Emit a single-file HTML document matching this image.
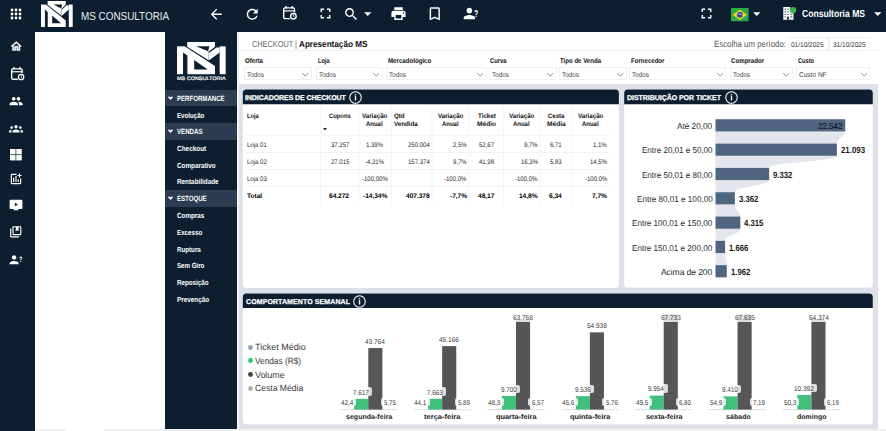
<!DOCTYPE html>
<html lang="pt-BR"><head><meta charset="utf-8"><title>MS Consultoria - Checkout</title>
<style>
html,body{margin:0;padding:0;background:#fff;}
body{width:886px;height:431px;overflow:hidden;position:relative;font-family:"Liberation Sans",sans-serif;}
.t{position:absolute;white-space:nowrap;display:block;transform-origin:0 50%;transform:rotate(.03deg);}
.r{position:absolute;}
svg{position:absolute;overflow:visible;}
.lb{background:rgba(255,255,255,.8);border-radius:2px;}
</style></head><body>
<div class="r" style="left:0px;top:0px;width:886.00px;height:32.00px;background:#0c1e30;"></div>
<div class="r" style="left:0px;top:32px;width:35.00px;height:399.00px;background:#0c1e30;"></div>
<div class="r" style="left:165px;top:32px;width:72.00px;height:397.00px;background:#0c1e30;"></div>
<div class="r" style="left:237px;top:32px;width:641.00px;height:399.00px;background:#dee1ea;"></div>
<div class="r" style="left:238px;top:32px;width:640.00px;height:52.00px;background:#ffffff;"></div>
<div class="r" style="left:238px;top:50px;width:640.00px;height:1.00px;background:#f0f0f2;"></div>
<div class="r" style="left:237px;top:32px;width:2.00px;height:399.00px;background:#f1f3f9;"></div>
<svg style="left:9.600px;top:7.700px" width="12" height="12" viewBox="0 0 12 12" fill="#fff"><circle cx="2" cy="2" r="1.400"/><circle cx="2" cy="6" r="1.400"/><circle cx="2" cy="10" r="1.400"/><circle cx="6" cy="2" r="1.400"/><circle cx="6" cy="6" r="1.400"/><circle cx="6" cy="10" r="1.400"/><circle cx="10" cy="2" r="1.400"/><circle cx="10" cy="6" r="1.400"/><circle cx="10" cy="10" r="1.400"/></svg>
<svg style="left:40.5px;top:0.8px" width="31.7" height="26" viewBox="0 0 525 347" preserveAspectRatio="none">
<rect x="0" y="47" width="65" height="300" fill="#fff"/>
<rect x="460" y="47" width="65" height="300" fill="#fff"/>
<polygon points="110,0 410,0 410,50 340,104 340,196 110,50" fill="#fff"/>
<polygon points="205,47 348,47 336,100" fill="#0c1e30"/>
<polygon points="460,58 460,112 350,194 340,196 340,120 426,58" fill="#fff"/>
<polygon points="65,47 82,47 410,260 410,347 112,347 112,146 65,114" fill="#fff"/>
<polygon points="185,194 185,297 332,297" fill="#0c1e30"/>
</svg>
<span class="t " style="left:80.60px;top:9px;font-size:11.6px;line-height:14px;color:#e8ecf0;transform:rotate(.03deg) scaleX(0.8535);">MS CONSULTORIA</span>
<svg style="left:208.25px;top:5.65px" width="16.5" height="16.5" viewBox="0 0 24 24" fill="#fff"><path d="M20 11H7.83l5.59-5.59L12 4l-8 8 8 8 1.41-1.41L7.83 13H20v-2z"/></svg>
<svg style="left:244.05px;top:5.65px" width="16.5" height="16.5" viewBox="0 0 24 24" fill="#fff"><path d="M17.65 6.35C16.2 4.9 14.21 4 12 4c-4.42 0-7.99 3.58-7.99 8s3.57 8 7.99 8c3.73 0 6.84-2.55 7.73-6h-2.08c-.82 2.33-3.04 4-5.65 4-3.31 0-6-2.69-6-6s2.69-6 6-6c1.66 0 3.14.69 4.22 1.78L13 11h7V4l-2.35 2.35z"/></svg>
<svg style="left:282.6px;top:6.4px" width="13.6" height="13.6" viewBox="0 0 13.6 13.6"><rect x="0.700" y="1.900" width="10.800" height="10.700" rx="1.300" fill="none" stroke="#fff" stroke-width="1.400"/><rect x="2.300" y="0" width="1.400" height="2.400" fill="#fff"/><rect x="8.500" y="0" width="1.400" height="2.400" fill="#fff"/><rect x="0.700" y="4.300" width="10.800" height="1.200" fill="#fff"/><circle cx="10.400" cy="10.300" r="4.100" fill="#0c1e30"/><circle cx="10.400" cy="10.300" r="2.800" fill="none" stroke="#fff" stroke-width="1.300"/><path d="M10.400 8.800v1.600l1.100 .7" stroke="#fff" stroke-width="0.900" fill="none"/></svg>
<svg style="left:316.80px;top:5.40px" width="17" height="17" viewBox="0 0 24 24" fill="#fff"><path d="M7 14H5v5h5v-2H7v-3zm-2-4h2V7h3V5H5v5zm12 7h-3v2h5v-5h-2v3zM14 5v2h3v3h2V5h-5z"/></svg>
<svg style="left:343.25px;top:5.65px" width="16.5" height="16.5" viewBox="0 0 24 24" fill="#fff"><path d="M15.5 14h-.79l-.28-.27C15.41 12.59 16 11.11 16 9.5 16 5.91 13.09 3 9.5 3S3 5.91 3 9.5 5.91 16 9.5 16c1.61 0 3.09-.59 4.23-1.57l.27.28v.79l5 4.99L20.49 19l-4.99-5zm-6 0C7.01 14 5 11.99 5 9.5S7.01 5 9.5 5 14 7.01 14 9.5 11.99 14 9.5 14z"/></svg>
<svg style="left:358.55px;top:5.15px" width="17.5" height="17.5" viewBox="0 0 24 24" fill="#fff"><path d="M7 10l5 5 5-5z"/></svg>
<svg style="left:390.10px;top:5.20px" width="17" height="17" viewBox="0 0 24 24" fill="#fff"><path d="M19 8H5c-1.66 0-3 1.34-3 3v6h4v4h12v-4h4v-6c0-1.66-1.34-3-3-3zm-3 11H8v-5h8v5zm3-7c-.55 0-1-.45-1-1s.45-1 1-1 1 .45 1 1-.45 1-1 1zm-1-9H6v4h12V3z"/></svg>
<svg style="left:425.95px;top:4.85px" width="17.5" height="17.5" viewBox="0 0 24 24" fill="#fff"><path d="M17 3H7c-1.1 0-1.99.9-1.99 2L5 21l7-3 7 3V5c0-1.1-.9-2-2-2zm0 15l-5-2.18L7 18V5h10v13z"/></svg>
<svg style="left:462.70px;top:5.40px" width="17" height="17" viewBox="0 0 24 24" fill="#fff"><path d="M9 12c2.210 0 4-1.790 4-4s-1.790-4-4-4-4 1.790-4 4 1.790 4 4 4zm0 2c-2.670 0-8 1.340-8 4v2h16v-2c0-2.660-5.330-4-8-4z"/></svg>
<span class="t " style="left:474.40px;top:7px;font-size:10px;line-height:13px;color:#fff;font-weight:700;transform:rotate(.03deg) scaleX(0.6876);">?</span>
<svg style="left:697.50px;top:5.30px" width="17" height="17" viewBox="0 0 24 24" fill="#fff"><path d="M7 14H5v5h5v-2H7v-3zm-2-4h2V7h3V5H5v5zm12 7h-3v2h5v-5h-2v3zM14 5v2h3v3h2V5h-5z"/></svg>
<svg style="left:731px;top:7.7px" width="17.6" height="13.3" viewBox="0 0 176 133"><rect width="176" height="133" rx="8" fill="#2aa84a"/><polygon points="88,14 160,66.500 88,119 16,66.500" fill="#f7d417"/><circle cx="88" cy="66.500" r="30" fill="#2b49a3"/><path d="M59 60c20-6 42 0 58 16" stroke="#fff" stroke-width="6" fill="none"/></svg>
<svg style="left:748.25px;top:5.25px" width="17.5" height="17.5" viewBox="0 0 24 24" fill="#fff"><path d="M7 10l5 5 5-5z"/></svg>
<svg style="left:783px;top:7px" width="11" height="13" viewBox="0 0 11 13"><rect x="0.300" y="0" width="7" height="12.800" fill="#fff"/><rect x="7.300" y="4.400" width="3.200" height="8.400" fill="#fff"/><g fill="#0c1e30"><rect x="1.700" y="1.600" width="1.100" height="1.100"/><rect x="4.400" y="1.600" width="1.100" height="1.100"/><rect x="1.700" y="4.200" width="1.100" height="1.100"/><rect x="4.400" y="4.200" width="1.100" height="1.100"/><rect x="1.700" y="6.800" width="1.100" height="1.100"/><rect x="4.400" y="6.800" width="1.100" height="1.100"/><rect x="1.700" y="9.400" width="1.100" height="1.100"/><rect x="8.200" y="6.800" width="1.100" height="1.100"/><rect x="8.200" y="9.400" width="1.100" height="1.100"/><rect x="4.100" y="9.600" width="1.700" height="3.200"/></g></svg>
<svg style="left:789.600px;top:6.800px" width="6.200" height="6.200" viewBox="0 0 10 10"><circle cx="5" cy="5" r="5" fill="#3fb04f"/></svg>
<span class="t " style="left:801.70px;top:7px;font-size:10.2px;line-height:13px;color:#fff;font-weight:700;transform:rotate(.03deg) scaleX(0.8435);">Consultoria MS</span>
<svg style="left:869.25px;top:5.25px" width="17.5" height="17.5" viewBox="0 0 24 24" fill="#fff"><path d="M7 10l5 5 5-5z"/></svg>
<svg style="left:9.85px;top:39.75px" width="12.5" height="12.5" viewBox="0 0 24 24" fill="#fff"><path stroke="#fff" stroke-width="1.1" d="M12 5.69l5 4.5V18h-2v-6H9v6H7v-7.81l5-4.5M12 3L2 12h3v8h6v-6h2v6h6v-8h3L12 3z"/></svg>
<svg style="left:10.6px;top:66.8px" width="13.2" height="13.2" viewBox="0 0 13.6 13.6"><rect x="0.700" y="1.900" width="10.800" height="10.700" rx="1.300" fill="none" stroke="#fff" stroke-width="1.400"/><rect x="2.300" y="0" width="1.400" height="2.400" fill="#fff"/><rect x="8.500" y="0" width="1.400" height="2.400" fill="#fff"/><rect x="0.700" y="4.300" width="10.800" height="1.200" fill="#fff"/><circle cx="10.400" cy="10.300" r="4.100" fill="#0c1e30"/><circle cx="10.400" cy="10.300" r="2.800" fill="none" stroke="#fff" stroke-width="1.300"/><path d="M10.400 8.800v1.600l1.100 .7" stroke="#fff" stroke-width="0.900" fill="none"/></svg>
<svg style="left:8.90px;top:94.10px" width="14.2" height="14.2" viewBox="0 0 24 24" fill="#fff"><path d="M16 11c1.66 0 2.99-1.34 2.99-3S17.66 5 16 5c-1.66 0-3 1.34-3 3s1.34 3 3 3zm-8 0c1.66 0 2.990-1.340 2.990-3S9.660 5 8 5C6.340 5 5 6.340 5 8s1.340 3 3 3zm0 2c-2.330 0-7 1.170-7 3.500V19h14v-2.500c0-2.330-4.670-3.500-7-3.500zm8 0c-.29 0-.62.020-.97.050 1.160.840 1.970 1.970 1.970 3.450V19h6v-2.500c0-2.330-4.670-3.500-7-3.500z"/></svg>
<svg style="left:9.00px;top:121.60px" width="14" height="14" viewBox="0 0 24 24" fill="#fff"><circle cx="12" cy="8.2" r="2.9"/><circle cx="4.6" cy="9.6" r="2.2"/><circle cx="19.400" cy="9.600" r="2.200"/><path d="M6 18v-1.500c0-2.300 3.200-3.600 6-3.600s6 1.300 6 3.600V18H6z"/><path d="M0 18v-1.200c0-1.700 1.700-2.700 3.700-3 .300 0 .700 0 1.200.100-.700.800-.900 1.600-.900 2.600V18H0z"/><path d="M24 18v-1.200c0-1.700-1.700-2.700-3.700-3-.3 0-.7 0-1.200.1.700.8.900 1.600.900 2.600V18H24z"/></svg>
<svg style="left:9.800px;top:149.100px" width="11.800" height="11.400" viewBox="0 0 11.800 11.400"><rect width="11.800" height="11.400" fill="#fff"/><rect x="5.550" y="0" width="0.700" height="11.400" fill="#0c1e30"/><rect x="0" y="5.350" width="11.800" height="0.700" fill="#0c1e30"/></svg>
<svg style="left:9.00px;top:171.90px" width="14" height="14" viewBox="0 0 24 24" fill="#fff"><path d="M19 19H5V5h8V3H5c-1.100 0-2 .9-2 2v14c0 1.100.9 2 2 2h14c1.100 0 2-.9 2-2v-8h-2v8z"/><path d="M15 13h2v4h-2zM7 10h2v7H7zM11 7h2v10h-2z"/><path d="M19 5V2.500h-2V5h-2.500v2H17v2.500h2V7h2.500V5z"/></svg>
<svg style="left:9.30px;top:197.60px" width="14" height="14" viewBox="0 0 24 24" fill="#fff"><path d="M21 3H3c-1.100 0-2 .9-2 2v12c0 1.100.9 2 2 2h5v2h8v-2h5c1.100 0 2-.9 2-2V5c0-1.100-.9-2-2-2z"/><path d="M10 8v6l5.500-3z" fill="#0c1e30"/></svg>
<svg style="left:9.25px;top:224.55px" width="13.5" height="13.5" viewBox="0 0 24 24" fill="#fff"><path d="M4 6H2v14c0 1.100.9 2 2 2h14v-2H4V6z"/><path d="M20 2H8c-1.100 0-2 .9-2 2v12c0 1.100.9 2 2 2h12c1.100 0 2-.9 2-2V4c0-1.100-.9-2-2-2zm0 14H8V4h4v7l2.500-1.500L17 11V4h3v12z"/></svg>
<svg style="left:9.23px;top:252.57px" width="13.65" height="13.65" viewBox="0 0 24 24" fill="#fff"><path d="M9 12c2.210 0 4-1.790 4-4s-1.790-4-4-4-4 1.790-4 4 1.790 4 4 4zm0 2c-2.670 0-8 1.340-8 4v2h16v-2c0-2.660-5.330-4-8-4z"/></svg>
<span class="t " style="left:18.90px;top:254px;font-size:7.8px;line-height:11px;color:#fff;font-weight:700;transform:rotate(.03deg) scaleX(0.6926);">?</span>
<svg style="left:176.8px;top:41.5px" width="48.7" height="32.2" viewBox="0 0 525 347" preserveAspectRatio="none">
<rect x="0" y="47" width="65" height="300" fill="#fff"/>
<rect x="460" y="47" width="65" height="300" fill="#fff"/>
<polygon points="110,0 410,0 410,50 340,104 340,196 110,50" fill="#fff"/>
<polygon points="205,47 348,47 336,100" fill="#0c1e30"/>
<polygon points="460,58 460,112 350,194 340,196 340,120 426,58" fill="#fff"/>
<polygon points="65,47 82,47 410,260 410,347 112,347 112,146 65,114" fill="#fff"/>
<polygon points="185,194 185,297 332,297" fill="#0c1e30"/>
</svg>
<span class="t " style="left:177.10px;top:75px;font-size:4.9px;line-height:7px;color:#fff;transform:rotate(.03deg) scaleX(1.1156);-webkit-text-stroke:0.2px #fff;">MS CONSULTORIA</span>
<div class="r" style="left:165px;top:90px;width:72.00px;height:16.00px;background:#2c3d51;"></div>
<span class="t " style="left:177.00px;top:93px;font-size:7.5px;line-height:11px;color:#fff;font-weight:700;transform:rotate(.03deg) scaleX(0.8102);">PERFORMANCE</span>
<svg style="left:168.400px;top:95.80px" width="5" height="4" viewBox="0 0 10 8"><path d="M1 1.500l4 4 4-4" stroke="#fff" stroke-width="3.200" fill="none"/></svg>
<span class="t " style="left:177.00px;top:110px;font-size:7.4px;line-height:11px;color:#fff;font-weight:700;transform:rotate(.03deg) scaleX(0.8328);">Evolução</span>
<div class="r" style="left:165px;top:123px;width:72.00px;height:17.00px;background:#2c3d51;"></div>
<span class="t " style="left:177.00px;top:126px;font-size:7.5px;line-height:11px;color:#fff;font-weight:700;transform:rotate(.03deg) scaleX(0.8158);">VENDAS</span>
<svg style="left:168.400px;top:129.30px" width="5" height="4" viewBox="0 0 10 8"><path d="M1 1.500l4 4 4-4" stroke="#fff" stroke-width="3.200" fill="none"/></svg>
<span class="t " style="left:177.00px;top:143px;font-size:7.4px;line-height:11px;color:#fff;font-weight:700;transform:rotate(.03deg) scaleX(0.8690);">Checkout</span>
<span class="t " style="left:177.00px;top:160px;font-size:7.4px;line-height:11px;color:#fff;font-weight:700;transform:rotate(.03deg) scaleX(0.8556);">Comparativo</span>
<span class="t " style="left:177.00px;top:176px;font-size:7.4px;line-height:11px;color:#fff;font-weight:700;transform:rotate(.03deg) scaleX(0.8594);">Rentabilidade</span>
<div class="r" style="left:165px;top:190.3px;width:72.00px;height:16.50px;background:#2c3d51;"></div>
<span class="t " style="left:177.00px;top:193px;font-size:7.5px;line-height:11px;color:#fff;font-weight:700;transform:rotate(.03deg) scaleX(0.8101);">ESTOQUE</span>
<svg style="left:168.400px;top:196.35px" width="5" height="4" viewBox="0 0 10 8"><path d="M1 1.500l4 4 4-4" stroke="#fff" stroke-width="3.200" fill="none"/></svg>
<span class="t " style="left:177.00px;top:210px;font-size:7.4px;line-height:11px;color:#fff;font-weight:700;transform:rotate(.03deg) scaleX(0.8511);">Compras</span>
<span class="t " style="left:177.00px;top:227px;font-size:7.4px;line-height:11px;color:#fff;font-weight:700;transform:rotate(.03deg) scaleX(0.8424);">Excesso</span>
<span class="t " style="left:177.00px;top:244px;font-size:7.4px;line-height:11px;color:#fff;font-weight:700;transform:rotate(.03deg) scaleX(0.8391);">Ruptura</span>
<span class="t " style="left:177.00px;top:260px;font-size:7.4px;line-height:11px;color:#fff;font-weight:700;transform:rotate(.03deg) scaleX(0.8298);">Sem Giro</span>
<span class="t " style="left:177.00px;top:277px;font-size:7.4px;line-height:11px;color:#fff;font-weight:700;transform:rotate(.03deg) scaleX(0.8444);">Reposição</span>
<span class="t " style="left:177.00px;top:294px;font-size:7.4px;line-height:11px;color:#fff;font-weight:700;transform:rotate(.03deg) scaleX(0.8602);">Prevenção</span>
<span class="t " style="left:251.80px;top:38px;font-size:8.9px;line-height:12px;color:#666;transform:rotate(.03deg) scaleX(0.8275);">CHECKOUT | </span>
<span class="t " style="left:299.40px;top:38px;font-size:8.9px;line-height:12px;color:#111;font-weight:700;transform:rotate(.03deg) scaleX(0.9185);">Apresentação MS</span>
<span class="t " style="left:713.60px;top:38px;font-size:9.0px;line-height:12px;color:#555;transform:rotate(.03deg) scaleX(0.8722);">Escolha um período:</span>
<div class="r" style="left:787.6px;top:36.8px;width:39.10px;height:12.20px;border:0.5px solid #f0f0f0;background:#fff"></div>
<div class="r" style="left:829.4px;top:36.8px;width:39.10px;height:12.20px;border:0.5px solid #f0f0f0;background:#fff"></div>
<span class="t " style="left:791.30px;top:40px;font-size:7.0px;line-height:9px;color:#333;transform:rotate(.03deg) scaleX(0.9305);">01/10/2025</span>
<span class="t " style="left:833.20px;top:40px;font-size:7.0px;line-height:9px;color:#333;transform:rotate(.03deg) scaleX(0.9305);">31/10/2025</span>
<span class="t " style="left:245.00px;top:56px;font-size:6.9px;line-height:9px;color:#111;font-weight:700;transform:rotate(.03deg) scaleX(0.8857);">Oferta</span>
<div class="r" style="left:243.5px;top:67.4px;width:66.50px;height:11.00px;border:0.5px solid #f0f0f0;background:#fff"></div>
<span class="t " style="left:246.50px;top:70px;font-size:7.0px;line-height:9px;color:#444;transform:rotate(.03deg) scaleX(0.9101);">Todos</span>
<svg style="left:302.20px;top:72.70px" width="6.50" height="3.4" viewBox="0 0 6.50 3.4"><path d="M0.2 0.2L3.25 3L6.30 0.2" stroke="#555" stroke-width="0.7" fill="none"/></svg>
<span class="t " style="left:317.50px;top:56px;font-size:6.9px;line-height:9px;color:#111;font-weight:700;transform:rotate(.03deg) scaleX(0.8108);">Loja</span>
<div class="r" style="left:316.2px;top:67.4px;width:64.80px;height:11.00px;border:0.5px solid #f0f0f0;background:#fff"></div>
<span class="t " style="left:319.20px;top:70px;font-size:7.0px;line-height:9px;color:#444;transform:rotate(.03deg) scaleX(0.9101);">Todos</span>
<svg style="left:373.20px;top:72.70px" width="6.50" height="3.4" viewBox="0 0 6.50 3.4"><path d="M0.2 0.2L3.25 3L6.30 0.2" stroke="#555" stroke-width="0.7" fill="none"/></svg>
<span class="t " style="left:388.00px;top:56px;font-size:6.9px;line-height:9px;color:#111;font-weight:700;transform:rotate(.03deg) scaleX(0.8893);">Mercadológico</span>
<div class="r" style="left:386.4px;top:67.4px;width:98.50px;height:11.00px;border:0.5px solid #f0f0f0;background:#fff"></div>
<span class="t " style="left:389.40px;top:70px;font-size:7.0px;line-height:9px;color:#444;transform:rotate(.03deg) scaleX(0.9101);">Todos</span>
<svg style="left:477.10px;top:72.70px" width="6.50" height="3.4" viewBox="0 0 6.50 3.4"><path d="M0.2 0.2L3.25 3L6.30 0.2" stroke="#555" stroke-width="0.7" fill="none"/></svg>
<span class="t " style="left:490.10px;top:56px;font-size:6.9px;line-height:9px;color:#111;font-weight:700;transform:rotate(.03deg) scaleX(0.8487);">Curva</span>
<div class="r" style="left:489.4px;top:67.4px;width:65.40px;height:11.00px;border:0.5px solid #f0f0f0;background:#fff"></div>
<span class="t " style="left:492.10px;top:70px;font-size:7.0px;line-height:9px;color:#444;transform:rotate(.03deg) scaleX(0.9101);">Todos</span>
<svg style="left:547.00px;top:72.70px" width="6.50" height="3.4" viewBox="0 0 6.50 3.4"><path d="M0.2 0.2L3.25 3L6.30 0.2" stroke="#555" stroke-width="0.7" fill="none"/></svg>
<span class="t " style="left:560.30px;top:56px;font-size:6.9px;line-height:9px;color:#111;font-weight:700;transform:rotate(.03deg) scaleX(0.8810);">Tipo de Venda</span>
<div class="r" style="left:559px;top:67.4px;width:65.50px;height:11.00px;border:0.5px solid #f0f0f0;background:#fff"></div>
<span class="t " style="left:562.00px;top:70px;font-size:7.0px;line-height:9px;color:#444;transform:rotate(.03deg) scaleX(0.9101);">Todos</span>
<svg style="left:616.70px;top:72.70px" width="6.50" height="3.4" viewBox="0 0 6.50 3.4"><path d="M0.2 0.2L3.25 3L6.30 0.2" stroke="#555" stroke-width="0.7" fill="none"/></svg>
<span class="t " style="left:630.50px;top:56px;font-size:6.9px;line-height:9px;color:#111;font-weight:700;transform:rotate(.03deg) scaleX(0.8826);">Fornecedor</span>
<div class="r" style="left:629.2px;top:67.4px;width:95.20px;height:11.00px;border:0.5px solid #f0f0f0;background:#fff"></div>
<span class="t " style="left:632.20px;top:70px;font-size:7.0px;line-height:9px;color:#444;transform:rotate(.03deg) scaleX(0.9101);">Todos</span>
<svg style="left:716.60px;top:72.70px" width="6.50" height="3.4" viewBox="0 0 6.50 3.4"><path d="M0.2 0.2L3.25 3L6.30 0.2" stroke="#555" stroke-width="0.7" fill="none"/></svg>
<span class="t " style="left:731.20px;top:56px;font-size:6.9px;line-height:9px;color:#111;font-weight:700;transform:rotate(.03deg) scaleX(0.8901);">Comprador</span>
<div class="r" style="left:729.9px;top:67.4px;width:60.90px;height:11.00px;border:0.5px solid #f0f0f0;background:#fff"></div>
<span class="t " style="left:732.90px;top:70px;font-size:7.0px;line-height:9px;color:#444;transform:rotate(.03deg) scaleX(0.9101);">Todos</span>
<svg style="left:783.00px;top:72.70px" width="6.50" height="3.4" viewBox="0 0 6.50 3.4"><path d="M0.2 0.2L3.25 3L6.30 0.2" stroke="#555" stroke-width="0.7" fill="none"/></svg>
<span class="t " style="left:798.10px;top:56px;font-size:6.9px;line-height:9px;color:#111;font-weight:700;transform:rotate(.03deg) scaleX(0.8236);">Custo</span>
<div class="r" style="left:796.3px;top:67.4px;width:72.20px;height:11.00px;border:0.5px solid #f0f0f0;background:#fff"></div>
<span class="t " style="left:799.30px;top:70px;font-size:7.0px;line-height:9px;color:#444;transform:rotate(.03deg) scaleX(0.9336);">Custo NF</span>
<svg style="left:860.70px;top:72.70px" width="6.50" height="3.4" viewBox="0 0 6.50 3.4"><path d="M0.2 0.2L3.25 3L6.30 0.2" stroke="#555" stroke-width="0.7" fill="none"/></svg>
<svg style="left:0;top:0" width="886" height="431" viewBox="0 0 886 431"><rect x="242.8" y="89.6" width="376.10" height="198.40" rx="3.5" fill="#fff"/><path d="M242.8 104.14999999999999V93.1a3.5 3.5 0 0 1 3.5 -3.5H615.4a3.5 3.5 0 0 1 3.5 3.5V104.14999999999999Z" fill="#0c1e30"/></svg>
<span class="t " style="left:244.80px;top:93px;font-size:7.0px;line-height:9px;color:#fff;font-weight:700;letter-spacing:-0.069px;-webkit-text-stroke:0.25px #fff;">INDICADORES DE CHECKOUT</span>
<svg style="left:349.40px;top:90.85px" width="13" height="13" viewBox="0 0 13 13"><circle cx="6.500" cy="6.500" r="5.750" fill="none" stroke="#fff" stroke-width="1.050"/><rect x="5.800" y="5.100" width="1.400" height="4.300" fill="#fff"/><rect x="5.800" y="3.200" width="1.400" height="1.200" fill="#fff"/></svg>
<svg style="left:0;top:0" width="886" height="431" viewBox="0 0 886 431"><rect x="624.2" y="89.6" width="248.60" height="197.80" rx="3.5" fill="#fff"/><path d="M624.2 104.14999999999999V93.1a3.5 3.5 0 0 1 3.5 -3.5H869.3a3.5 3.5 0 0 1 3.5 3.5V104.14999999999999Z" fill="#0c1e30"/></svg>
<span class="t " style="left:626.60px;top:93px;font-size:7.0px;line-height:9px;color:#fff;font-weight:700;letter-spacing:-0.039px;-webkit-text-stroke:0.25px #fff;">DISTRIBUIÇÃO POR TICKET</span>
<svg style="left:725.20px;top:90.85px" width="13" height="13" viewBox="0 0 13 13"><circle cx="6.500" cy="6.500" r="5.750" fill="none" stroke="#fff" stroke-width="1.050"/><rect x="5.800" y="5.100" width="1.400" height="4.300" fill="#fff"/><rect x="5.800" y="3.200" width="1.400" height="1.200" fill="#fff"/></svg>
<svg style="left:0;top:0" width="886" height="431" viewBox="0 0 886 431"><rect x="242.8" y="293.5" width="630.00" height="130.80" rx="3.5" fill="#fff"/><path d="M242.8 308.05V297.0a3.5 3.5 0 0 1 3.5 -3.5H869.3a3.5 3.5 0 0 1 3.5 3.5V308.05Z" fill="#0c1e30"/></svg>
<span class="t " style="left:245.50px;top:297px;font-size:7.0px;line-height:9px;color:#fff;font-weight:700;letter-spacing:0.099px;-webkit-text-stroke:0.25px #fff;">COMPORTAMENTO SEMANAL</span>
<svg style="left:353.10px;top:294.75px" width="13" height="13" viewBox="0 0 13 13"><circle cx="6.500" cy="6.500" r="5.750" fill="none" stroke="#fff" stroke-width="1.050"/><rect x="5.800" y="5.100" width="1.400" height="4.300" fill="#fff"/><rect x="5.800" y="3.200" width="1.400" height="1.200" fill="#fff"/></svg>
<svg style="left:0;top:0" width="886" height="431" viewBox="0 0 886 431"><rect x="245.5" y="134.80" width="364.6" height="1" fill="#f1f1f3"/><rect x="245.5" y="151.90" width="364.6" height="1" fill="#f1f1f3"/><rect x="245.5" y="169.00" width="364.6" height="1" fill="#f1f1f3"/><rect x="245.5" y="185.90" width="364.6" height="1" fill="#f1f1f3"/><rect x="320.00" y="107" width="1" height="96.6" fill="#f3f4f8"/><rect x="358.30" y="107" width="1" height="96.6" fill="#f3f4f8"/><rect x="390.90" y="107" width="1" height="96.6" fill="#f3f4f8"/><rect x="431.50" y="107" width="1" height="96.6" fill="#f3f4f8"/><rect x="468.30" y="107" width="1" height="96.6" fill="#f3f4f8"/><rect x="502.90" y="107" width="1" height="96.6" fill="#f3f4f8"/><rect x="539.40" y="107" width="1" height="96.6" fill="#f3f4f8"/><rect x="571.60" y="107" width="1" height="96.6" fill="#f3f4f8"/></svg>
<span class="t " style="left:247.30px;top:111px;font-size:6.6px;line-height:9px;color:#111;font-weight:700;transform:rotate(.03deg) scaleX(0.8623);">Loja</span>
<span class="t " style="left:328.70px;top:111px;font-size:6.6px;line-height:9px;color:#111;font-weight:700;transform:rotate(.03deg) scaleX(0.8875);">Cupons</span>
<svg style="left:323px;top:127.800px" width="4" height="2.400" viewBox="0 0 4 2.400"><path d="M0 0h4L2 2.400z" fill="#222"/></svg>
<span class="t " style="left:362.00px;top:111px;font-size:6.6px;line-height:9px;color:#111;font-weight:700;transform:rotate(.03deg) scaleX(0.9354);">Variação</span>
<span class="t " style="left:366.40px;top:119px;font-size:6.6px;line-height:9px;color:#111;font-weight:700;transform:rotate(.03deg) scaleX(0.9054);">Anual</span>
<span class="t " style="left:393.90px;top:111px;font-size:6.6px;line-height:9px;color:#111;font-weight:700;transform:rotate(.03deg) scaleX(0.9240);">Qtd</span>
<span class="t " style="left:393.90px;top:119px;font-size:6.6px;line-height:9px;color:#111;font-weight:700;transform:rotate(.03deg) scaleX(0.9404);">Vendida</span>
<span class="t " style="left:437.70px;top:111px;font-size:6.6px;line-height:9px;color:#111;font-weight:700;transform:rotate(.03deg) scaleX(0.9354);">Variação</span>
<span class="t " style="left:442.10px;top:119px;font-size:6.6px;line-height:9px;color:#111;font-weight:700;transform:rotate(.03deg) scaleX(0.9054);">Anual</span>
<span class="t " style="left:477.50px;top:111px;font-size:6.6px;line-height:9px;color:#111;font-weight:700;transform:rotate(.03deg) scaleX(0.9390);">Ticket</span>
<span class="t " style="left:476.90px;top:119px;font-size:6.6px;line-height:9px;color:#111;font-weight:700;letter-spacing:-0.013px;">Médio</span>
<span class="t " style="left:508.80px;top:111px;font-size:6.6px;line-height:9px;color:#111;font-weight:700;transform:rotate(.03deg) scaleX(0.9354);">Variação</span>
<span class="t " style="left:513.20px;top:119px;font-size:6.6px;line-height:9px;color:#111;font-weight:700;transform:rotate(.03deg) scaleX(0.9054);">Anual</span>
<span class="t " style="left:547.80px;top:111px;font-size:6.6px;line-height:9px;color:#111;font-weight:700;transform:rotate(.03deg) scaleX(0.9123);">Cesta</span>
<span class="t " style="left:546.65px;top:119px;font-size:6.6px;line-height:9px;color:#111;font-weight:700;">Média</span>
<span class="t " style="left:577.80px;top:111px;font-size:6.6px;line-height:9px;color:#111;font-weight:700;transform:rotate(.03deg) scaleX(0.9354);">Variação</span>
<span class="t " style="left:582.20px;top:119px;font-size:6.6px;line-height:9px;color:#111;font-weight:700;transform:rotate(.03deg) scaleX(0.9054);">Anual</span>
<span class="t " style="left:247.30px;top:140px;font-size:6.7px;line-height:9px;color:#262626;transform:rotate(.03deg) scaleX(0.9000);">Loja 01</span>
<span class="t " style="left:330.56px;top:140px;font-size:6.7px;line-height:9px;color:#262626;transform:rotate(.03deg) scaleX(0.9000);">37.257</span>
<span class="t " style="left:366.45px;top:140px;font-size:6.7px;line-height:9px;color:#262626;transform:rotate(.03deg) scaleX(0.9000);">1,39%</span>
<span class="t " style="left:408.20px;top:140px;font-size:6.7px;line-height:9px;color:#262626;transform:rotate(.03deg) scaleX(0.9000);">250.004</span>
<span class="t " style="left:453.06px;top:140px;font-size:6.7px;line-height:9px;color:#262626;transform:rotate(.03deg) scaleX(0.9000);">2,5%</span>
<span class="t " style="left:478.55px;top:140px;font-size:6.7px;line-height:9px;color:#262626;transform:rotate(.03deg) scaleX(0.9000);">52,67</span>
<span class="t " style="left:524.16px;top:140px;font-size:6.7px;line-height:9px;color:#262626;transform:rotate(.03deg) scaleX(0.9000);">9,7%</span>
<span class="t " style="left:549.93px;top:140px;font-size:6.7px;line-height:9px;color:#262626;transform:rotate(.03deg) scaleX(0.9000);">6,71</span>
<span class="t " style="left:593.46px;top:140px;font-size:6.7px;line-height:9px;color:#262626;transform:rotate(.03deg) scaleX(0.9000);">1,1%</span>
<span class="t " style="left:247.30px;top:157px;font-size:6.7px;line-height:9px;color:#262626;transform:rotate(.03deg) scaleX(0.9000);">Loja 02</span>
<span class="t " style="left:330.56px;top:157px;font-size:6.7px;line-height:9px;color:#262626;transform:rotate(.03deg) scaleX(0.9000);">27.015</span>
<span class="t " style="left:365.45px;top:157px;font-size:6.7px;line-height:9px;color:#262626;transform:rotate(.03deg) scaleX(0.9000);">-4,21%</span>
<span class="t " style="left:408.20px;top:157px;font-size:6.7px;line-height:9px;color:#262626;transform:rotate(.03deg) scaleX(0.9000);">157.374</span>
<span class="t " style="left:453.06px;top:157px;font-size:6.7px;line-height:9px;color:#262626;transform:rotate(.03deg) scaleX(0.9000);">9,7%</span>
<span class="t " style="left:478.55px;top:157px;font-size:6.7px;line-height:9px;color:#262626;transform:rotate(.03deg) scaleX(0.9000);">41,98</span>
<span class="t " style="left:520.80px;top:157px;font-size:6.7px;line-height:9px;color:#262626;transform:rotate(.03deg) scaleX(0.9000);">16,3%</span>
<span class="t " style="left:549.93px;top:157px;font-size:6.7px;line-height:9px;color:#262626;transform:rotate(.03deg) scaleX(0.9000);">5,83</span>
<span class="t " style="left:590.10px;top:157px;font-size:6.7px;line-height:9px;color:#262626;transform:rotate(.03deg) scaleX(0.9000);">14,5%</span>
<span class="t " style="left:247.30px;top:174px;font-size:6.7px;line-height:9px;color:#262626;transform:rotate(.03deg) scaleX(0.9000);">Loja 03</span>
<span class="t " style="left:362.09px;top:174px;font-size:6.7px;line-height:9px;color:#262626;transform:rotate(.03deg) scaleX(0.9000);">-100,00%</span>
<span class="t " style="left:444.34px;top:174px;font-size:6.7px;line-height:9px;color:#262626;transform:rotate(.03deg) scaleX(0.9000);">-100,0%</span>
<span class="t " style="left:515.44px;top:174px;font-size:6.7px;line-height:9px;color:#262626;transform:rotate(.03deg) scaleX(0.9000);">-100,0%</span>
<span class="t " style="left:584.74px;top:174px;font-size:6.7px;line-height:9px;color:#262626;transform:rotate(.03deg) scaleX(0.9000);">-100,0%</span>
<span class="t " style="left:247.30px;top:191px;font-size:6.7px;line-height:9px;color:#000;font-weight:700;letter-spacing:-0.078px;">Total</span>
<span class="t " style="left:329.02px;top:191px;font-size:6.7px;line-height:9px;color:#000;font-weight:700;letter-spacing:-0.085px;">64.272</span>
<span class="t " style="left:362.83px;top:191px;font-size:6.7px;line-height:9px;color:#000;font-weight:700;letter-spacing:-0.089px;">-14,34%</span>
<span class="t " style="left:406.39px;top:191px;font-size:6.7px;line-height:9px;color:#000;font-weight:700;letter-spacing:-0.086px;">407.378</span>
<span class="t " style="left:449.73px;top:191px;font-size:6.7px;line-height:9px;color:#000;font-weight:700;letter-spacing:-0.088px;">-7,7%</span>
<span class="t " style="left:477.93px;top:191px;font-size:6.7px;line-height:9px;color:#000;font-weight:700;letter-spacing:-0.084px;">48,17</span>
<span class="t " style="left:519.38px;top:191px;font-size:6.7px;line-height:9px;color:#000;font-weight:700;letter-spacing:-0.095px;">14,8%</span>
<span class="t " style="left:549.44px;top:191px;font-size:6.7px;line-height:9px;color:#000;font-weight:700;letter-spacing:-0.082px;">6,34</span>
<span class="t " style="left:592.31px;top:191px;font-size:6.7px;line-height:9px;color:#000;font-weight:700;letter-spacing:-0.095px;">7,7%</span>
<svg style="left:0;top:0" width="886" height="431" viewBox="0 0 886 431"><path d="M715.50 131.45L845.20 131.45C845.20 137.51 836.86 137.51 836.86 143.57L715.50 143.57ZM715.50 155.77L836.86 155.77C836.86 161.83 769.19 161.83 769.19 167.89L715.50 167.89ZM715.50 180.09L769.19 180.09C769.19 186.15 734.84 186.15 734.84 192.21L715.50 192.21ZM715.50 204.41L734.84 204.41C734.84 210.47 740.33 210.47 740.33 216.53L715.50 216.53ZM715.50 228.73L740.33 228.73C740.33 234.79 725.09 234.79 725.09 240.85L715.50 240.85ZM715.50 253.05L725.09 253.05C725.09 259.11 726.79 259.11 726.79 265.17L715.50 265.17Z" fill="#e3e6ec"/><rect x="715.50" y="119.25" width="129.70" height="12.2" fill="#4f6580"/><rect x="715.50" y="143.57" width="121.36" height="12.2" fill="#4f6580"/><rect x="715.50" y="167.89" width="53.69" height="12.2" fill="#4f6580"/><rect x="715.50" y="192.21" width="19.34" height="12.2" fill="#4f6580"/><rect x="715.50" y="216.53" width="24.83" height="12.2" fill="#4f6580"/><rect x="715.50" y="240.85" width="9.59" height="12.2" fill="#4f6580"/><rect x="715.50" y="265.17" width="11.29" height="12.2" fill="#4f6580"/></svg>
<span class="t " style="left:677.00px;top:120px;font-size:8.6px;line-height:12px;color:#2a2a2a;transform:rotate(.03deg) scaleX(0.9560);">Até 20,00</span>
<span class="t " style="left:817.60px;top:120px;font-size:8.5px;line-height:12px;color:#10151c;transform:rotate(.03deg) scaleX(0.9347);-webkit-text-stroke:0.15px #10151c;">22.542</span>
<span class="t " style="left:641.60px;top:144px;font-size:8.6px;line-height:12px;color:#2a2a2a;transform:rotate(.03deg) scaleX(0.9345);">Entre 20,01 e 50,00</span>
<span class="t " style="left:840.76px;top:144px;font-size:9.0px;line-height:12px;color:#1a1a1a;font-weight:700;transform:rotate(.03deg) scaleX(0.8718);">21.093</span>
<span class="t " style="left:641.60px;top:169px;font-size:8.6px;line-height:12px;color:#2a2a2a;transform:rotate(.03deg) scaleX(0.9345);">Entre 50,01 e 80,00</span>
<span class="t " style="left:773.09px;top:169px;font-size:9.0px;line-height:12px;color:#1a1a1a;font-weight:700;transform:rotate(.03deg) scaleX(0.8614);">9.332</span>
<span class="t " style="left:636.50px;top:193px;font-size:8.6px;line-height:12px;color:#2a2a2a;transform:rotate(.03deg) scaleX(0.9423);">Entre 80,01 e 100,00</span>
<span class="t " style="left:738.74px;top:193px;font-size:9.0px;line-height:12px;color:#1a1a1a;font-weight:700;transform:rotate(.03deg) scaleX(0.8614);">3.362</span>
<span class="t " style="left:632.00px;top:217px;font-size:8.6px;line-height:12px;color:#2a2a2a;transform:rotate(.03deg) scaleX(0.9422);">Entre 100,01 e 150,00</span>
<span class="t " style="left:744.23px;top:217px;font-size:9.0px;line-height:12px;color:#1a1a1a;font-weight:700;transform:rotate(.03deg) scaleX(0.8614);">4.315</span>
<span class="t " style="left:632.00px;top:242px;font-size:8.6px;line-height:12px;color:#2a2a2a;transform:rotate(.03deg) scaleX(0.9422);">Entre 150,01 e 200,00</span>
<span class="t " style="left:728.99px;top:242px;font-size:9.0px;line-height:12px;color:#1a1a1a;font-weight:700;transform:rotate(.03deg) scaleX(0.8614);">1.666</span>
<span class="t " style="left:661.00px;top:266px;font-size:8.6px;line-height:12px;color:#2a2a2a;letter-spacing:-0.116px;">Acima de 200</span>
<span class="t " style="left:730.69px;top:266px;font-size:9.0px;line-height:12px;color:#1a1a1a;font-weight:700;transform:rotate(.03deg) scaleX(0.8614);">1.962</span>
<svg style="left:247.900px;top:344.60px" width="5" height="5" viewBox="0 0 5 5"><circle cx="2.500" cy="2.500" r="2.450" fill="#8ea3bb"/></svg>
<span class="t " style="left:255.00px;top:341px;font-size:9.0px;line-height:12px;color:#3c3c3c;letter-spacing:0.018px;">Ticket Médio</span>
<svg style="left:247.900px;top:358.25px" width="5" height="5" viewBox="0 0 5 5"><circle cx="2.500" cy="2.500" r="2.450" fill="#2fc774"/></svg>
<span class="t " style="left:255.00px;top:355px;font-size:9.0px;line-height:12px;color:#3c3c3c;transform:rotate(.03deg) scaleX(0.9195);">Vendas (R$)</span>
<svg style="left:247.900px;top:371.90px" width="5" height="5" viewBox="0 0 5 5"><circle cx="2.500" cy="2.500" r="2.450" fill="#444"/></svg>
<span class="t " style="left:255.00px;top:369px;font-size:9.0px;line-height:12px;color:#3c3c3c;letter-spacing:-0.070px;">Volume</span>
<svg style="left:247.900px;top:385.55px" width="5" height="5" viewBox="0 0 5 5"><circle cx="2.500" cy="2.500" r="2.450" fill="#a9b4c2"/></svg>
<span class="t " style="left:255.00px;top:382px;font-size:9.0px;line-height:12px;color:#3c3c3c;transform:rotate(.03deg) scaleX(0.9540);">Cesta Média</span>
<span class="t " style="left:345.50px;top:412px;font-size:6.9px;line-height:9px;color:#222;font-weight:700;letter-spacing:0.089px;">segunda-feira</span>
<span class="t " style="left:424.30px;top:412px;font-size:6.9px;line-height:9px;color:#222;font-weight:700;transform:rotate(.03deg) scaleX(1.0938);">terça-feira</span>
<span class="t " style="left:496.10px;top:412px;font-size:6.9px;line-height:9px;color:#222;font-weight:700;transform:rotate(.03deg) scaleX(1.0695);">quarta-feira</span>
<span class="t " style="left:570.10px;top:412px;font-size:6.9px;line-height:9px;color:#222;font-weight:700;transform:rotate(.03deg) scaleX(1.0727);">quinta-feira</span>
<span class="t " style="left:645.80px;top:412px;font-size:6.9px;line-height:9px;color:#222;font-weight:700;transform:rotate(.03deg) scaleX(1.0602);">sexta-feira</span>
<span class="t " style="left:725.55px;top:412px;font-size:6.9px;line-height:9px;color:#222;font-weight:700;letter-spacing:0.107px;">sábado</span>
<span class="t " style="left:797.00px;top:412px;font-size:6.9px;line-height:9px;color:#222;font-weight:700;letter-spacing:0.068px;">domingo</span>
<svg style="left:0;top:0" width="886" height="431" viewBox="0 0 886 431"><rect x="339.60" y="409.35" width="57.50" height="0.75" fill="#ccd4e0"/><rect x="354.20" y="398.89" width="14.10" height="10.71" fill="#41c07c"/><rect x="368.30" y="348.06" width="14.10" height="61.54" fill="#565656"/><rect x="413.45" y="409.35" width="57.50" height="0.75" fill="#ccd4e0"/><rect x="428.05" y="398.82" width="14.10" height="10.78" fill="#41c07c"/><rect x="442.15" y="346.09" width="14.10" height="63.51" fill="#565656"/><rect x="487.30" y="409.35" width="57.50" height="0.75" fill="#ccd4e0"/><rect x="501.90" y="395.96" width="14.10" height="13.64" fill="#41c07c"/><rect x="516.00" y="319.93" width="14.10" height="89.67" fill="#565656"/><rect x="561.15" y="409.35" width="57.50" height="0.75" fill="#ccd4e0"/><rect x="575.75" y="396.19" width="14.10" height="13.41" fill="#41c07c"/><rect x="589.85" y="332.35" width="14.10" height="77.25" fill="#565656"/><rect x="635.00" y="409.35" width="57.50" height="0.75" fill="#ccd4e0"/><rect x="649.60" y="395.60" width="14.10" height="14.00" fill="#41c07c"/><rect x="663.70" y="314.36" width="14.10" height="95.24" fill="#565656"/><rect x="708.85" y="409.35" width="57.50" height="0.75" fill="#ccd4e0"/><rect x="723.45" y="396.37" width="14.10" height="13.23" fill="#41c07c"/><rect x="737.55" y="314.49" width="14.10" height="95.11" fill="#565656"/><rect x="782.70" y="409.35" width="57.50" height="0.75" fill="#ccd4e0"/><rect x="797.30" y="394.99" width="14.10" height="14.61" fill="#41c07c"/><rect x="811.40" y="319.08" width="14.10" height="90.52" fill="#565656"/></svg>
<div class="r lb" style="left:362.15px;top:336.61px;width:26.40px;height:8.5px"></div>
<div class="r lb" style="left:349.75px;top:387.44px;width:22.40px;height:8.5px"></div>
<div class="r lb" style="left:337.25px;top:397.80px;width:19.00px;height:8.5px"></div>
<div class="r lb" style="left:380.75px;top:397.80px;width:18.40px;height:8.5px"></div>
<div class="r lb" style="left:436.00px;top:334.64px;width:26.40px;height:8.5px"></div>
<div class="r lb" style="left:423.60px;top:387.37px;width:22.40px;height:8.5px"></div>
<div class="r lb" style="left:411.10px;top:397.80px;width:19.00px;height:8.5px"></div>
<div class="r lb" style="left:454.60px;top:397.80px;width:18.40px;height:8.5px"></div>
<div class="r lb" style="left:509.85px;top:313.10px;width:26.40px;height:8.5px"></div>
<div class="r lb" style="left:497.45px;top:384.51px;width:22.40px;height:8.5px"></div>
<div class="r lb" style="left:484.95px;top:397.80px;width:19.00px;height:8.5px"></div>
<div class="r lb" style="left:528.45px;top:397.80px;width:18.40px;height:8.5px"></div>
<div class="r lb" style="left:583.70px;top:320.90px;width:26.40px;height:8.5px"></div>
<div class="r lb" style="left:571.30px;top:384.74px;width:22.40px;height:8.5px"></div>
<div class="r lb" style="left:558.80px;top:397.80px;width:19.00px;height:8.5px"></div>
<div class="r lb" style="left:602.30px;top:397.80px;width:18.40px;height:8.5px"></div>
<div class="r lb" style="left:657.55px;top:313.10px;width:26.40px;height:8.5px"></div>
<div class="r lb" style="left:645.15px;top:384.15px;width:22.40px;height:8.5px"></div>
<div class="r lb" style="left:632.65px;top:397.80px;width:19.00px;height:8.5px"></div>
<div class="r lb" style="left:676.15px;top:397.80px;width:18.40px;height:8.5px"></div>
<div class="r lb" style="left:731.40px;top:313.10px;width:26.40px;height:8.5px"></div>
<div class="r lb" style="left:719.00px;top:384.92px;width:22.40px;height:8.5px"></div>
<div class="r lb" style="left:706.50px;top:397.80px;width:19.00px;height:8.5px"></div>
<div class="r lb" style="left:750.00px;top:397.80px;width:18.40px;height:8.5px"></div>
<div class="r lb" style="left:805.25px;top:313.10px;width:26.40px;height:8.5px"></div>
<div class="r lb" style="left:790.85px;top:383.54px;width:26.40px;height:8.5px"></div>
<div class="r lb" style="left:780.35px;top:397.80px;width:19.00px;height:8.5px"></div>
<div class="r lb" style="left:823.85px;top:397.80px;width:18.40px;height:8.5px"></div>
<span class="t " style="left:365.45px;top:337px;font-size:7.0px;line-height:9px;color:#3a3a3a;transform:rotate(.03deg) scaleX(0.9248);">43.764</span>
<span class="t " style="left:353.05px;top:388px;font-size:7.0px;line-height:9px;color:#3a3a3a;transform:rotate(.03deg) scaleX(0.9020);">7.617</span>
<span class="t " style="left:340.55px;top:398px;font-size:7.0px;line-height:9px;color:#3a3a3a;transform:rotate(.03deg) scaleX(0.9101);">42,4</span>
<span class="t " style="left:384.05px;top:398px;font-size:7.0px;line-height:9px;color:#3a3a3a;transform:rotate(.03deg) scaleX(0.8661);">5,75</span>
<span class="t " style="left:439.30px;top:335px;font-size:7.0px;line-height:9px;color:#3a3a3a;transform:rotate(.03deg) scaleX(0.9248);">45.166</span>
<span class="t " style="left:426.90px;top:388px;font-size:7.0px;line-height:9px;color:#3a3a3a;transform:rotate(.03deg) scaleX(0.9020);">7.663</span>
<span class="t " style="left:414.40px;top:398px;font-size:7.0px;line-height:9px;color:#3a3a3a;transform:rotate(.03deg) scaleX(0.9101);">44,1</span>
<span class="t " style="left:457.90px;top:398px;font-size:7.0px;line-height:9px;color:#3a3a3a;transform:rotate(.03deg) scaleX(0.8661);">5,89</span>
<span class="t " style="left:513.15px;top:313px;font-size:7.0px;line-height:9px;color:#3a3a3a;transform:rotate(.03deg) scaleX(0.9248);">63.768</span>
<span class="t " style="left:500.75px;top:385px;font-size:7.0px;line-height:9px;color:#3a3a3a;transform:rotate(.03deg) scaleX(0.9020);">9.700</span>
<span class="t " style="left:488.25px;top:398px;font-size:7.0px;line-height:9px;color:#3a3a3a;transform:rotate(.03deg) scaleX(0.9101);">48,3</span>
<span class="t " style="left:531.75px;top:398px;font-size:7.0px;line-height:9px;color:#3a3a3a;transform:rotate(.03deg) scaleX(0.8661);">6,57</span>
<span class="t " style="left:587.00px;top:321px;font-size:7.0px;line-height:9px;color:#3a3a3a;transform:rotate(.03deg) scaleX(0.9248);">54.938</span>
<span class="t " style="left:574.60px;top:385px;font-size:7.0px;line-height:9px;color:#3a3a3a;transform:rotate(.03deg) scaleX(0.9020);">9.536</span>
<span class="t " style="left:562.10px;top:398px;font-size:7.0px;line-height:9px;color:#3a3a3a;transform:rotate(.03deg) scaleX(0.9101);">45,6</span>
<span class="t " style="left:605.60px;top:398px;font-size:7.0px;line-height:9px;color:#3a3a3a;transform:rotate(.03deg) scaleX(0.8661);">5,76</span>
<span class="t " style="left:660.85px;top:313px;font-size:7.0px;line-height:9px;color:#3a3a3a;transform:rotate(.03deg) scaleX(0.9248);">67.733</span>
<span class="t " style="left:648.45px;top:384px;font-size:7.0px;line-height:9px;color:#3a3a3a;transform:rotate(.03deg) scaleX(0.9020);">9.954</span>
<span class="t " style="left:635.95px;top:398px;font-size:7.0px;line-height:9px;color:#3a3a3a;transform:rotate(.03deg) scaleX(0.9101);">49,5</span>
<span class="t " style="left:679.45px;top:398px;font-size:7.0px;line-height:9px;color:#3a3a3a;transform:rotate(.03deg) scaleX(0.8661);">6,80</span>
<span class="t " style="left:734.70px;top:313px;font-size:7.0px;line-height:9px;color:#3a3a3a;transform:rotate(.03deg) scaleX(0.9248);">67.635</span>
<span class="t " style="left:722.30px;top:385px;font-size:7.0px;line-height:9px;color:#3a3a3a;transform:rotate(.03deg) scaleX(0.9020);">9.410</span>
<span class="t " style="left:709.80px;top:398px;font-size:7.0px;line-height:9px;color:#3a3a3a;transform:rotate(.03deg) scaleX(0.9101);">54,9</span>
<span class="t " style="left:753.30px;top:398px;font-size:7.0px;line-height:9px;color:#3a3a3a;transform:rotate(.03deg) scaleX(0.8661);">7,19</span>
<span class="t " style="left:808.55px;top:313px;font-size:7.0px;line-height:9px;color:#3a3a3a;transform:rotate(.03deg) scaleX(0.9248);">64.374</span>
<span class="t " style="left:794.15px;top:384px;font-size:7.0px;line-height:9px;color:#3a3a3a;transform:rotate(.03deg) scaleX(0.9248);">10.392</span>
<span class="t " style="left:783.65px;top:398px;font-size:7.0px;line-height:9px;color:#3a3a3a;transform:rotate(.03deg) scaleX(0.9101);">50,3</span>
<span class="t " style="left:827.15px;top:398px;font-size:7.0px;line-height:9px;color:#3a3a3a;transform:rotate(.03deg) scaleX(0.8661);">6,19</span>
<div class="r" style="left:35px;top:429px;width:851.00px;height:2.00px;background:#f1f0ee;"></div>
<div class="r" style="left:66px;top:429px;width:38.00px;height:2.00px;background:#ffffff;"></div>
</body></html>
